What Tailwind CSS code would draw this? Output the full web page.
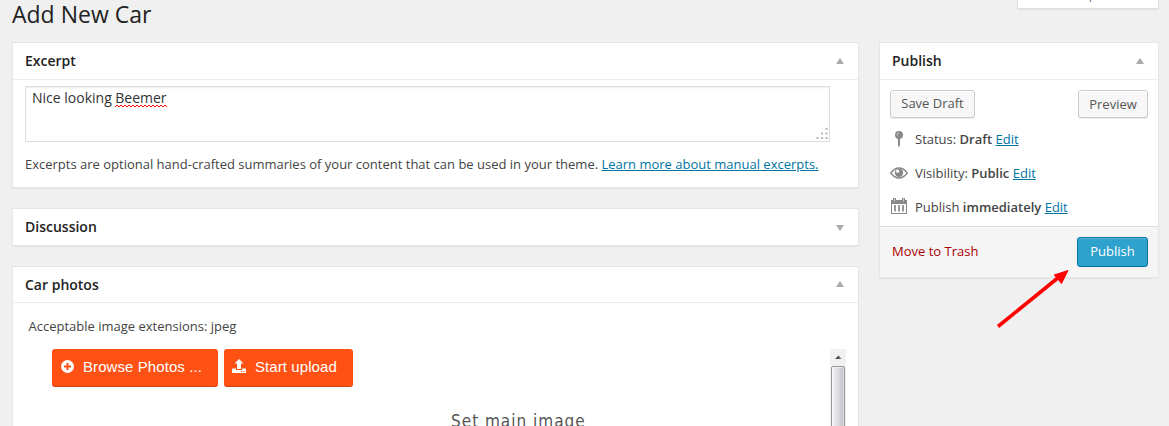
<!DOCTYPE html>
<html lang="en">
<head>
<meta charset="utf-8">
<title>Add New Car</title>
<script src="https://cdn.jsdelivr.net/npm/@tailwindcss/browser@4"></script>
</head>
<body class="bg-[#f0f0f0]">
<div class="relative h-[426px] w-[1169px] overflow-hidden bg-[#f0f0f0] pl-3 font-['Open_Sans',sans-serif] text-[13px] leading-[19px] text-[#444]">
  <header class="flex h-[42px] items-start justify-between pr-2.5">
    <h1 class="whitespace-nowrap text-[23px] leading-[29px] text-[#222]">Add New Car</h1>
    <div class="-mt-4 flex h-[25px] w-[142px] items-start overflow-hidden border border-[#dedede] bg-white pl-4 text-[#777] shadow-[0_1px_1px_rgba(0,0,0,0.05)]"><span class="whitespace-nowrap leading-[19px]">Screen Options ▾</span></div>
  </header>
  <div class="flex items-start gap-5">
    <main class="flex w-[847px] flex-col gap-5">
      <section class="h-[146px] border border-[#e5e5e5] bg-white shadow-[0_1px_1px_rgba(0,0,0,0.04)]">
        <div class="flex h-[37px] items-center justify-between border-b border-[#eee] pr-3.5 pl-3">
          <h2 class="pb-[2px] text-[14px] font-semibold text-[#222]">Excerpt</h2>
          <svg class="h-[6px] w-[8px]" viewBox="0 0 8 6"><path d="M4 0L8 6H0Z" fill="#aaa"/></svg>
        </div>
        <div class="flex flex-col pt-1.5 pl-3">
          <div class="flex h-[56px] w-[805px] justify-between border border-[#ddd] bg-white pl-1.5 shadow-[inset_0_1px_2px_rgba(0,0,0,0.07)]">
            <p class="flex h-[22px] gap-[3.500px] text-[14px] leading-[22px] text-[#333]"><span>Nice looking</span><span class="relative">Beemer
              <svg class="absolute top-[17px] left-0 h-[4px] w-[52px]" viewBox="0 0 52 4"><path d="M0 3L2 1L4 3L6 1L8 3L10 1L12 3L14 1L16 3L18 1L20 3L22 1L24 3L26 1L28 3L30 1L32 3L34 1L36 3L38 1L40 3L42 1L44 3L46 1L48 3L50 1L52 3" fill="none" stroke="#f00"/></svg></span></p>
            <svg class="mt-auto mr-px mb-px h-[12px] w-[12px]" viewBox="0 0 12 12" fill="#b8b8b8"><path d="M9.500 0h2v2h-2zM5 4.500h2v2H5zM9.500 4.500h2v2h-2zM.5 9h2v2h-2zM5 9h2v2H5zM9.500 9h2v2h-2z"/></svg>
          </div>
          <p class="mt-[13px] whitespace-nowrap">Excerpts are optional hand-crafted summaries of your content that can be used in your theme. <a class="text-[#0074a2] underline">Learn more about manual excerpts.</a></p>
        </div>
      </section>
      <section class="flex h-[38px] items-center justify-between border border-[#e5e5e5] bg-white pr-3.5 pl-3 shadow-[0_1px_1px_rgba(0,0,0,0.04)]">
        <h2 class="pb-[2px] text-[14px] font-semibold text-[#222]">Discussion</h2>
        <svg class="mt-[2px] h-[6px] w-[8px]" viewBox="0 0 8 6"><path d="M0 0H8L4 6Z" fill="#aaa"/></svg>
      </section>
      <section class="h-[200px] border border-[#e5e5e5] bg-white">
        <div class="flex h-[36px] items-center justify-between border-b border-[#eee] pr-3.5 pl-3">
          <h2 class="text-[14px] font-semibold text-[#222]">Car photos</h2>
          <svg class="-mt-px h-[6px] w-[8px]" viewBox="0 0 8 6"><path d="M4 0L8 6H0Z" fill="#aaa"/></svg>
        </div>
        <p class="mt-3.5 ml-[15.500px]">Acceptable image extensions: jpeg</p>
        <div class="mt-[13px] flex justify-between pr-3 pl-[39px]">
          <div class="flex w-[778px] flex-col">
            <div class="flex gap-1.5 font-['Liberation_Sans',Arial,sans-serif] text-[15px] text-white">
              <button class="flex h-[38px] w-[166px] items-center gap-2 rounded-[3px] border-b border-[#d34310] bg-[#ff5114] pl-[9px] whitespace-nowrap">
                <svg class="-mt-[3px] h-[13px] w-[13px]" viewBox="0 0 13 13"><circle cx="6.500" cy="6.500" r="6.500" fill="#fff"/><path d="M6.500 3v7M3 6.500h7" stroke="#ff5114" stroke-width="2"/></svg>
                <span class="-mt-[2px] ml-px tracking-[0.08px]">Browse Photos ...</span>
              </button>
              <button class="flex h-[38px] w-[129px] items-center gap-2 rounded-[3px] border-b border-[#d34310] bg-[#ff5114] pl-2 whitespace-nowrap">
                <svg class="-mt-[3px] h-[14px] w-[14px]" viewBox="0 0 14 14"><path d="M7 0L11.500 4.500H9V10H5V4.500H2.500Z" fill="#fff"/><path d="M0 9.500h4V11h6V9.500h4V14H0z" fill="#fff"/><path d="M9 12.500h1M11.500 12.500h1" stroke="#ff5114"/></svg>
                <span class="-mt-[2px] ml-px tracking-[0.08px]">Start upload</span>
              </button>
            </div>
            <h3 class="mt-[23px] ml-[399px] whitespace-nowrap font-['DejaVu_Sans_Condensed','DejaVu_Sans',sans-serif] text-[17px] leading-[22px] tracking-[1px] text-[#555]">Set main image</h3>
          </div>
          <div class="flex h-[90px] w-4 flex-col bg-[#f1f1f1]">
            <svg class="h-[18px] w-4" viewBox="0 0 16 18"><defs><linearGradient id="arrow"><stop offset="0" stop-color="#222"/><stop offset="1" stop-color="#888"/></linearGradient></defs><path d="M8.500 7L12 11H5Z" fill="url(#arrow)"/></svg>
            <div class="ml-px h-[80px] w-[14px] rounded-[2px] border border-[#989898] bg-linear-to-r from-[#f4f4f4] via-[#dcdce0] to-[#c0c0c6] shadow-[inset_0_0_0_1px_rgba(255,255,255,0.5)]"></div>
          </div>
        </div>
      </section>
    </main>
    <aside class="h-[236px] w-[280px] border border-[#e5e5e5] bg-white shadow-[0_1px_1px_rgba(0,0,0,0.04)]">
      <div class="flex h-[37px] items-center justify-between border-b border-[#eee] pr-3.5 pl-3">
        <h2 class="pb-[2px] text-[14px] font-semibold text-[#222]">Publish</h2>
        <svg class="h-[6px] w-[8px]" viewBox="0 0 8 6"><path d="M4 0L8 6H0Z" fill="#aaa"/></svg>
      </div>
      <div class="flex h-[146px] flex-col pt-2.5 pr-2.5 pl-2.5">
        <div class="flex justify-between text-[#555]">
          <button class="h-[28px] w-[85px] rounded-[3px] border border-[#ccc] bg-[#f7f7f7] pb-[2px] shadow-[inset_0_1px_0_#fff,0_1px_0_rgba(0,0,0,0.08)]">Save Draft</button>
          <button class="h-[28px] w-[70px] rounded-[3px] border border-[#ccc] bg-[#f7f7f7] shadow-[inset_0_1px_0_#fff,0_1px_0_rgba(0,0,0,0.08)]">Preview</button>
        </div>
        <div class="mt-[4px] flex h-[34px] items-center gap-[7px]">
          <svg class="h-[18px] w-[18px]" viewBox="0 0 18 18"><circle cx="9" cy="5" r="4" fill="#888"/><path d="M8 8h2v7l-1 2.500L8 15z" fill="#888"/><path d="M7 5.500Q7 3 9 3" fill="none" stroke="#ccc"/></svg>
          <p>Status: <b class="font-semibold">Draft</b> <a class="text-[#0074a2] underline">Edit</a></p>
        </div>
        <div class="flex h-[34px] items-center gap-[7px]">
          <svg class="h-[18px] w-[18px]" viewBox="0 0 18 18"><path d="M.7 9Q4.500 4 9 4T17.300 9Q13.500 14 9 14T.7 9Z" fill="none" stroke="#888" stroke-width="1.300"/><circle cx="9" cy="8.700" r="4.200" fill="#888"/><circle cx="7.600" cy="7.200" r="1.600" fill="#fff"/></svg>
          <p>Visibility: <b class="font-semibold">Public</b> <a class="text-[#0074a2] underline">Edit</a></p>
        </div>
        <div class="flex h-[34px] items-center gap-[7px]">
          <svg class="-mt-[2px] h-[18px] w-[18px]" viewBox="0 0 18 18"><path d="M1 3h2V1h3v2h6V1h3v2h2v14H1zM2 7v9h14V7z" fill="#888" fill-rule="evenodd"/><path d="M4.500 1.500v3M13.500 1.500v3" stroke="#ccc"/><path d="M5 8v6.500M9 8v6.500M13 8v6.500" stroke="#888" stroke-width="1.700"/></svg>
          <p>Publish <b class="font-semibold">immediately</b> <a class="text-[#0074a2] underline">Edit</a></p>
        </div>
      </div>
      <div class="flex h-[51px] items-center justify-between border-t border-[#ddd] bg-[#f5f5f5] pr-2.5 pl-3">
        <a class="pb-[2px] text-[#a00]">Move to Trash</a>
        <button class="h-[30px] w-[71px] rounded-[3px] border border-[#0074a2] bg-[#2ea2cc] pb-px text-white shadow-[inset_0_1px_0_rgba(120,200,230,0.5)]">Publish</button>
      </div>
    </aside>
  </div>
  <svg class="absolute top-[265px] left-[990px] h-[70px] w-[85px]" viewBox="0 0 85 70"><path d="M8 61.500L69 12" stroke="#f00" stroke-width="3.600"/><path d="M78 5.500L64.200 10L67 13L71.500 18.500Z" fill="#f00" stroke="#f00" stroke-width="1"/></svg>
</div>
</body>
</html>
